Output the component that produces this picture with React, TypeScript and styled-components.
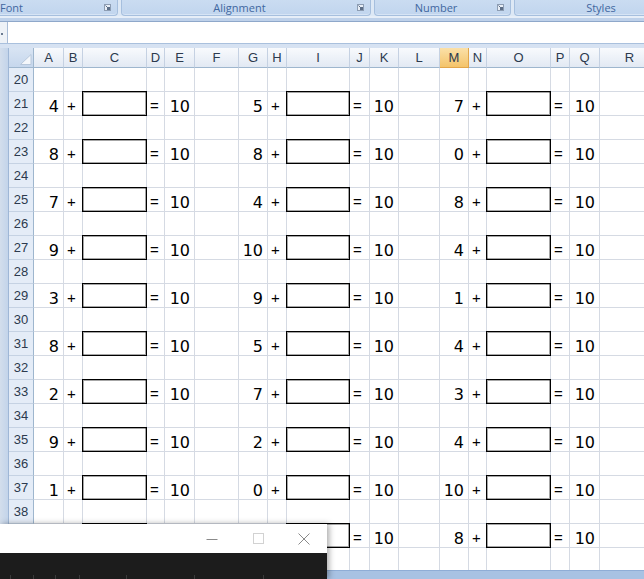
import React from 'react';
import styled, { createGlobalStyle } from 'styled-components';

const Global = createGlobalStyle`
  html, body { margin: 0; padding: 0; }
  body { width: 644px; height: 579px; overflow: hidden; background: #fff; font-family: "Liberation Sans", Arial, sans-serif; }
`;

const Screen = styled.div`
  position: relative;
  width: 644px;
  height: 579px;
  overflow: hidden;
  display: flex;
  flex-direction: column;
  background: #dbe6f4;
`;

const RibbonBar = styled.div`
  flex: none;
  height: 16px;
  display: flex;
  gap: 3px;
  background: #dde8f5;
  overflow: hidden;
`;

const Group = styled.div<{ $w: number; $offset?: number }>`
  flex: none;
  box-sizing: border-box;
  width: ${p => p.$w}px;
  margin-left: ${p => p.$offset ?? 0}px;
  display: flex;
  align-items: center;
  background: linear-gradient(#cadcf1, #c1d5ee);
  border: 1px solid #a6bfde;
  border-top: none;
  border-radius: 0 0 4px 4px;
  box-shadow: inset 0 -1px 0 #d6e4f5;
`;

const GroupLabel = styled.span<{ $start?: number }>`
  flex: 1;
  text-align: ${p => (p.$start !== undefined ? 'left' : 'center')};
  padding-left: ${p => p.$start ?? 0}px;
  font-family: "Open Sans", "Liberation Sans", sans-serif;
  font-size: 11px;
  line-height: 15px;
  color: #4167a0;
`;

const Launcher = styled.svg`
  flex: none;
  margin-right: 6px;
`;

const Divider = styled.div`
  flex: none;
  height: 5px;
  background: linear-gradient(#e6eef8 0 2px, #bed1ea 2px);
`;

const FormulaBar = styled.div`
  flex: none;
  box-sizing: border-box;
  height: 23px;
  display: flex;
  border-top: 1px solid #8fa8ca;
  border-bottom: 1px solid #a9c0dd;
  background: #fff;
`;

const NameStub = styled.div`
  flex: none;
  width: 7px;
  background: #eef2f7;
  border-right: 1px solid #a9bcd6;
  position: relative;
  &::after {
    content: '';
    position: absolute;
    left: 1px;
    top: 11px;
    width: 2px;
    height: 2px;
    background: #6a7a90;
  }
`;

const FormulaInput = styled.div`
  flex: 1;
  background: #fff;
`;

const Band = styled.div`
  flex: none;
  height: 4px;
  background: #d6e2f2;
`;

const Sheet = styled.div`
  flex: 1;
  display: flex;
  overflow: hidden;
  min-height: 0;
`;

const LeftStrip = styled.div`
  flex: none;
  box-sizing: border-box;
  width: 9px;
  background: linear-gradient(90deg, #d3deec, #c3d4ea);
  border-right: 1px solid #9fb7d6;
`;

const Grid = styled.div`
  flex: 1;
  display: grid;
  grid-template-columns: 25px 30px 19px 64px 18px 30px 44px 29px 19px 63px 20px 29px 41px 29px 18px 64px 19px 30px 60px;
  grid-template-rows: 20px repeat(21, 24px);
  align-content: start;
  background: #fff;
  overflow: hidden;
`;

const Corner = styled.div`
  box-sizing: border-box;
  border-right: 1px solid #9eb6ce;
  border-bottom: 1px solid #9eb6ce;
  background: linear-gradient(#d8e4f3, #c6d7ed);
  display: flex;
  align-items: flex-end;
  justify-content: flex-end;
  padding: 0 1px 2px 0;
`;

const ColHead = styled.div<{ $active?: boolean }>`
  box-sizing: border-box;
  border-right: 1px solid ${p => (p.$active ? '#e2a64a' : '#c5d1e2')};
  border-bottom: 1px solid ${p => (p.$active ? '#e2a64a' : '#9eb6ce')};
  background: ${p => (p.$active ? 'linear-gradient(#fbe0a8, #f4c46a)' : 'linear-gradient(#f8fafd, #e2e9f3)')};
  display: flex;
  align-items: center;
  justify-content: center;
  font-family: "Liberation Sans", Arial, sans-serif;
  font-size: 13px;
  color: #2c3a4e;
`;

const RowHead = styled.div`
  box-sizing: border-box;
  border-right: 1px solid #9eb6ce;
  border-bottom: 1px solid #c5d2e3;
  background: #e4ecf7;
  display: flex;
  align-items: center;
  justify-content: center;
  font-family: "Liberation Sans", Arial, sans-serif;
  font-size: 13px;
  color: #2c3a4e;
`;

const Cell = styled.div<{ $kind?: 'num' | 'op'; $box?: boolean }>`
  box-sizing: border-box;
  border-right: 1px solid ${p => (p.$box ? '#000' : '#d5dae3')};
  border-bottom: 1px solid ${p => (p.$box ? '#000' : '#d5dae3')};
  display: flex;
  align-items: flex-end;
  justify-content: ${p => (p.$kind === 'op' ? 'flex-start' : 'flex-end')};
  padding: ${p => (p.$kind === 'op' ? '0 0 1px 3px' : '0 4px 0 0')};
  font-family: ${p => (p.$kind === 'op' ? '"Liberation Sans", Arial, sans-serif' : '"DejaVu Sans", Verdana, sans-serif')};
  font-size: ${p => (p.$kind === 'op' ? '15px' : '16px')};
  line-height: 16px;
  color: #000;
  white-space: nowrap;
  ${p => (p.$box ? 'box-shadow: -1px -1px 0 #000, -1px 0 0 #000, 0 -1px 0 #000, inset 1px 1px 0 rgba(0,0,0,0.35), inset -1px -1px 0 rgba(0,0,0,0.35);' : '')}
`;

const StatusBand = styled.div`
  flex: none;
  height: 9px;
  box-sizing: border-box;
  background: #a8c2e3;
  border-top: 1px solid #8fadd6;
`;

const Window = styled.div`
  position: absolute;
  left: 0;
  top: 524px;
  width: 327px;
  height: 55px;
  display: flex;
  flex-direction: column;
  box-shadow: 2px 0 6px rgba(0, 0, 0, 0.35);
`;

const TitleBar = styled.div`
  flex: none;
  height: 29px;
  background: #fff;
  display: flex;
  justify-content: flex-end;
`;

const TitleBtn = styled.div`
  width: 46px;
  display: flex;
  align-items: center;
  justify-content: center;
`;

const DarkBody = styled.div`
  flex: 1;
  background: #1c1c1c;
  display: flex;
  flex-direction: column;
  justify-content: flex-end;
`;

const DarkStrip = styled.div`
  height: 4px;
  display: flex;
`;

const DarkCol = styled.div<{ $w: number }>`
  flex: none;
  width: ${p => p.$w}px;
  border-right: 1px solid #3a3a3a;
`;

const cols = ['A', 'B', 'C', 'D', 'E', 'F', 'G', 'H', 'I', 'J', 'K', 'L', 'M', 'N', 'O', 'P', 'Q', 'R'];

const data: number[][] = [
  [4, 5, 7],
  [8, 8, 0],
  [7, 4, 8],
  [9, 10, 4],
  [3, 9, 1],
  [8, 5, 4],
  [2, 7, 3],
  [9, 2, 4],
  [1, 0, 10],
  [6, 3, 8],
];

const LauncherIcon = () => (
  <Launcher width="7" height="7" viewBox="0 0 7 7">
    <rect x="0.5" y="0.5" width="6" height="6" fill="#e8eef6" stroke="#8d9db3" strokeWidth="1" />
    <rect x="3" y="3" width="3" height="3" fill="#5d6f88" />
    <path d="M1.5 1.5 L4 4" stroke="#5d6f88" strokeWidth="1" />
  </Launcher>
);

function renderRow(r: number) {
  const cells: React.ReactNode[] = [<RowHead key="h">{r}</RowHead>];
  const isProblem = r % 2 === 1 && r <= 39;
  const vals = isProblem ? data[(r - 21) / 2] : null;
  cols.forEach((c, i) => {
    const key = `${r}-${c}`;
    if (!vals) {
      cells.push(<Cell key={key} />);
      return;
    }
    const block = Math.floor(i / 6);
    const pos = i % 6;
    if (pos === 0) cells.push(<Cell key={key} $kind="num">{vals[block]}</Cell>);
    else if (pos === 1) cells.push(<Cell key={key} $kind="op">+</Cell>);
    else if (pos === 2) cells.push(<Cell key={key} $box />);
    else if (pos === 3) cells.push(<Cell key={key} $kind="op">=</Cell>);
    else if (pos === 4) cells.push(<Cell key={key} $kind="num">10</Cell>);
    else cells.push(<Cell key={key} />);
  });
  return cells;
}

export default function App() {
  const rows: number[] = [];
  for (let r = 20; r <= 40; r++) rows.push(r);
  return (
    <>
      <Global />
      <Screen>
        <RibbonBar>
          <Group $w={198} $offset={-80}>
            <GroupLabel $start={79}>Font</GroupLabel>
            <LauncherIcon />
          </Group>
          <Group $w={250}>
            <GroupLabel>Alignment</GroupLabel>
            <LauncherIcon />
          </Group>
          <Group $w={137}>
            <GroupLabel>Number</GroupLabel>
            <LauncherIcon />
          </Group>
          <Group $w={174}>
            <GroupLabel>Styles</GroupLabel>
          </Group>
        </RibbonBar>
        <Divider />
        <FormulaBar>
          <NameStub />
          <FormulaInput />
        </FormulaBar>
        <Band />
        <Sheet>
          <LeftStrip />
          <Grid>
            <Corner>
              <svg width="12" height="11" viewBox="0 0 12 11">
                <path d="M11 0.5 L11 10.5 L0.5 10.5 Z" fill="#f4f7fb" stroke="#b7c7db" strokeWidth="1" />
              </svg>
            </Corner>
            {cols.map(c => (
              <ColHead key={c} $active={c === 'M'}>{c}</ColHead>
            ))}
            {rows.map(r => renderRow(r))}
          </Grid>
        </Sheet>
        <StatusBand />
        <Window>
          <TitleBar>
            <TitleBtn>
              <svg width="12" height="10" viewBox="0 0 12 10">
                <path d="M0.5 5.5 H11.5" stroke="#8a8a8a" strokeWidth="1" />
              </svg>
            </TitleBtn>
            <TitleBtn>
              <svg width="11" height="11" viewBox="0 0 11 11">
                <rect x="0.5" y="0.5" width="10" height="10" fill="none" stroke="#d2d2d2" strokeWidth="1" />
              </svg>
            </TitleBtn>
            <TitleBtn>
              <svg width="12" height="12" viewBox="0 0 12 12">
                <path d="M0.5 0.5 L11.5 11.5 M11.5 0.5 L0.5 11.5" stroke="#8a8a8a" strokeWidth="1" />
              </svg>
            </TitleBtn>
          </TitleBar>
          <DarkBody>
            <DarkStrip>
              <DarkCol $w={10} />
              <DarkCol $w={22} />
              <DarkCol $w={21} />
              <DarkCol $w={23} />
              <DarkCol $w={46} />
              <DarkCol $w={67} />
              <DarkCol $w={68} />
            </DarkStrip>
          </DarkBody>
        </Window>
      </Screen>
    </>
  );
}
